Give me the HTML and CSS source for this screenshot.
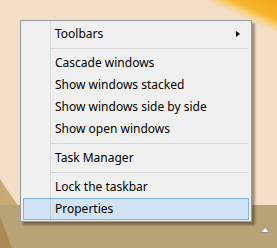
FILE: index.html
```html
<!DOCTYPE html>
<html>
<head>
<meta charset="utf-8">
<link rel="stylesheet" href="styles.css">
</head>
<body>
<div class="desktop"></div>
<div class="taskbar">
  <svg class="tray-arrow" width="10" height="7" viewBox="0 0 10 7"><path d="M0.5 6.5 L5 1.5 L9.5 6.5 Z" fill="#ffffff" stroke="#8a8a8a" stroke-width="0.8" stroke-linejoin="round"/></svg>
</div>
<div class="menu">
  <div class="item sub"><span>Toolbars</span><span class="arrow"></span></div>
  <div class="sep"></div>
  <div class="item">Cascade windows</div>
  <div class="item">Show windows stacked</div>
  <div class="item">Show windows side by side</div>
  <div class="item">Show open windows</div>
  <div class="sep"></div>
  <div class="item">Task Manager</div>
  <div class="sep"></div>
  <div class="item">Lock the taskbar</div>
  <div class="item active">Properties</div>
</div>
</body>
</html>
```
FILE: styles.css
```css
html, body {
  margin: 0;
  padding: 0;
}
body {
  width: 277px;
  height: 248px;
  overflow: hidden;
  position: relative;
  font-family: "Noto Sans", "Open Sans", sans-serif;
  font-size: 12px;
}
.desktop {
  height: 205px;
  background:
    linear-gradient(204deg, #f4a81c 0px, #f7b52c 18px, #f8cf7c 24px, rgba(242,222,198,0) 30px),
    linear-gradient(56deg, #c7a872 0px, #c9ab78 14px, rgba(242,222,198,0) 15px),
    #f2dec7;
}
.taskbar {
  height: 43px;
  background:
    linear-gradient(70deg, #a88a52 0px, #a88a52 10px, rgba(183,162,117,0) 12px),
    #b8a376;
  display: flex;
  justify-content: flex-end;
  align-items: flex-start;
}
.tray-arrow {
  margin-top: 21px;
  margin-right: 7px;
}
.menu {
  position: absolute;
  left: 20px;
  top: 20px;
  width: 232px;
  box-sizing: border-box;
  border: 1px solid #979797;
  background: #f0f0f0;
  padding: 2px 2px 1px 2px;
  box-shadow: 3px 3px 2px rgba(0,0,0,0.35);
}
.menu::before {
  content: "";
  position: absolute;
  left: 29px;
  top: 0;
  bottom: 0;
  width: 1px;
  background: rgba(0,0,0,0.09);
  z-index: 2;
}
.item {
  height: 22px;
  box-sizing: border-box;
  border: 1px solid transparent;
  padding-left: 31px;
  display: flex;
  align-items: center;
  color: #000;
  line-height: 20px;
}
.item.sub {
  justify-content: space-between;
}
.arrow {
  width: 0;
  height: 0;
  border-top: 3.5px solid transparent;
  border-bottom: 3.5px solid transparent;
  border-left: 4px solid #000;
  margin-right: 8px;
}
.item.active {
  background: #d1e2f3;
  border-color: #7fb2e6;
}
.sep {
  height: 7px;
  margin-left: 28px;
  margin-right: 1px;
  box-sizing: border-box;
  padding-top: 3px;
}
.sep::after {
  content: "";
  display: block;
  height: 1px;
  background: #d7d7d7;
}
```
